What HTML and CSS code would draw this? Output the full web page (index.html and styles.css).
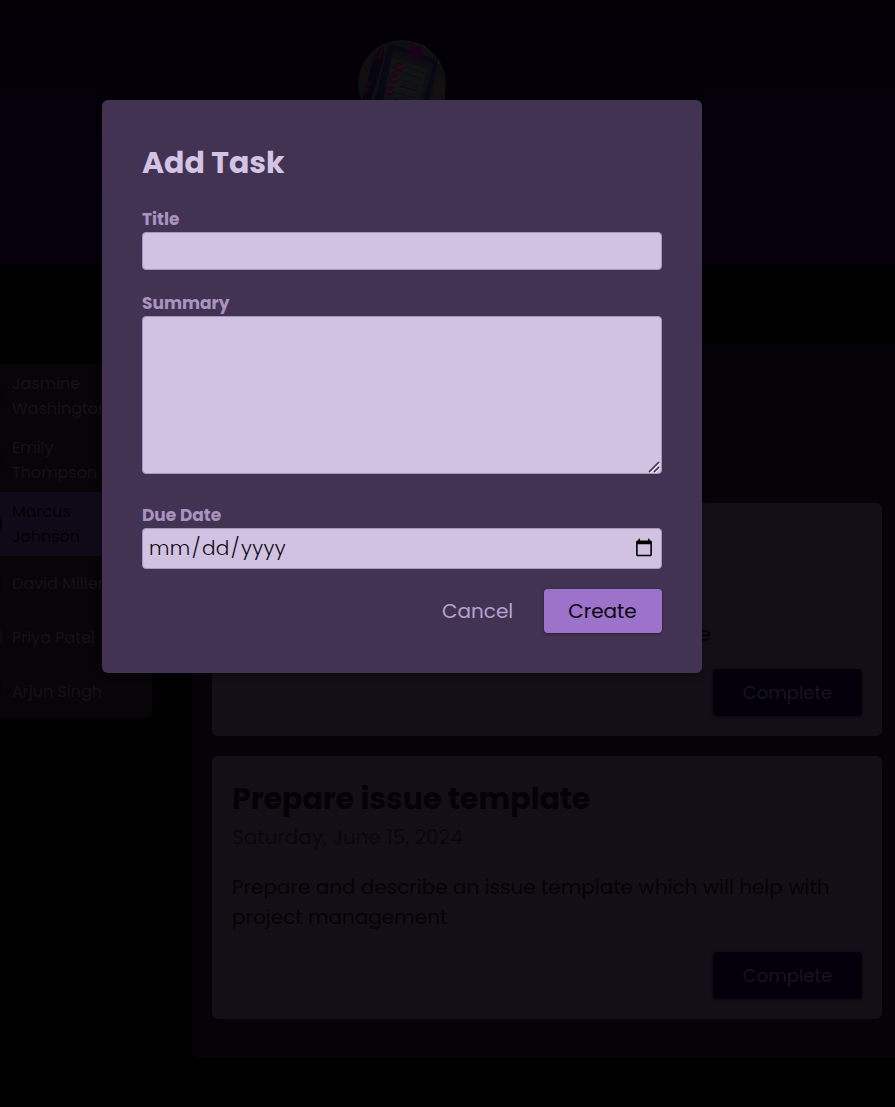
FILE: index.html
```html
<!DOCTYPE html>
<html lang="en">
<head>
<meta charset="utf-8">
<title>Add Task</title>
<link rel="stylesheet" href="styles.css">
</head>
<body>
<div class="page">
  <header class="header">
    <svg class="logo" viewBox="0 0 88 88" width="88" height="88" aria-hidden="true">
      <circle cx="44" cy="44" r="44" fill="#0f0f10"/>
      <path d="M66 88 Q72 52 82 34 Q90 52 86 66 L80 88Z" fill="#141011"/>
      <path d="M22 8 L26 6 L25 20 L13 60 L7 63 L5 58 L14 24Z" fill="#070512"/>
      <path d="M24 5 L26 9 L23 19 L18 18Z M18 14 L12 27 L14 15 L18 11Z" fill="#160512"/>
      <path d="M9 41 L14 42 L13 46 L8 45Z M7 47 L12 48 L11 52 L6 51Z" fill="#160512"/>
      <path d="M34 4 L79 20 Q81 21 80 24 L64 88 L10 88 L30 7 Q31 3 34 4Z" fill="#080814"/>
      <path d="M35 9 L75 24 L59 88 L19 88Z" fill="#0d0e12"/>
      <path d="M34 18 L69 29 L56 88 L20 88Z" fill="#121313"/>
      <path d="M44 13 L51 12 L54 5 Q60 2 64 8 L64 14 L66 22 L58 19Z" fill="#1a0319"/>
      <g fill="#1e0619"><circle cx="41" cy="27" r="5"/><circle cx="36" cy="39" r="5"/><circle cx="32" cy="51" r="5"/></g>
      <g fill="none" stroke="#190617"><path d="M47 27 L66 33 M43 40 L61 46 M39 53 L58 58"/></g>
      <g fill="none" stroke="#0b0b0e"><path d="M46 33 L64 39 M42 46 L59 51 M37 59 L55 65"/></g>
      <g fill="none" stroke="#211b20"><path d="M38 26 l3 2 l5 -3 M33 38 l3 2 l5 -3 M29 50 l3 2 l5 -3"/></g>
      <path d="M57 3 l3 2 M65 5 l2 3 M80 21 l1 3" stroke="#222124" fill="none"/>
    </svg>
  </header>
  <main class="main">
    <aside class="users">
      <div class="user"><i class="avatar"></i><span>Jasmine<br>Washington</span></div>
      <div class="user"><i class="avatar"></i><span>Emily<br>Thompson</span></div>
      <div class="user user-active"><i class="avatar avatar-black"></i><span>Marcus<br>Johnson</span></div>
      <div class="user"><i class="avatar"></i><span>David Miller</span></div>
      <div class="user"><i class="avatar avatar-light"></i><span>Priya Patel</span></div>
      <div class="user"><i class="avatar"></i><span>Arjun Singh</span></div>
    </aside>
    <section class="tasks">
      <article class="card card-first">
        <p class="summary summary-end">e</p>
        <div class="card-actions"><button class="complete">Complete</button></div>
      </article>
      <article class="card">
        <h2 class="card-title">Prepare issue template</h2>
        <time class="date">Saturday, June 15, 2024</time>
        <p class="summary">Prepare and describe an issue template which will help with<br>project management</p>
        <div class="card-actions"><button class="complete">Complete</button></div>
      </article>
    </section>
  </main>
</div>
<div class="modal">
  <h2 class="modal-title">Add Task</h2>
  <form class="form">
    <label class="label" for="title">Title</label>
    <input class="field field-title" id="title" type="text">
    <label class="label label-summary" for="summary">Summary</label>
    <div class="summary-wrap">
      <textarea class="field field-summary" id="summary"></textarea>
      <svg class="grip" viewBox="0 0 12 12" width="12" height="12" aria-hidden="true"><path d="M2.2 11.8L11.8 2.2M7.2 11.8L11.8 7.2" stroke="#f3edf8" stroke-width="1.2" fill="none"/><path d="M1 11L11 1M6 11L11 6" stroke="#3b3442" stroke-width="1.6" fill="none"/></svg>
    </div>
    <label class="label label-date" for="due">Due Date</label>
    <input class="field field-date" id="due" type="date">
    <div class="actions">
      <button class="cancel" type="button">Cancel</button>
      <button class="create" type="button">Create</button>
    </div>
  </form>
</div>
</body>
</html>
```
FILE: styles.css
```css
* { box-sizing: border-box; }
body {
  margin: 0;
  height: 1107px;
  overflow: hidden;
  background: #000001;
  font-family: Poppins, Inter, sans-serif;
}
button, input, textarea { font: inherit; }
h2, p { margin: 0; }
.page { width: 895px; height: 1107px; overflow: hidden; }
.header {
  height: 264px;
  padding-top: 40px;
  padding-left: 358px;
  background: linear-gradient(180deg, #030006, #07000d);
  box-shadow: 0 2px 8px #000;
}
.logo { display: block; }
.main { display: flex; align-items: flex-start; gap: 40px; margin-left: -48px; padding-top: 80px; }
.users {
  flex: none;
  width: 200px;
  margin-top: 20px;
  border-radius: 6px;
  overflow: hidden;
  background: #070508;
  color: #141216;
  font-size: 16px;
  line-height: 25px;
}
.user { display: flex; align-items: center; gap: 10px; padding: 7px 10px; white-space: nowrap; }
.user-active { background: #0f0a18; color: #030205; }
.avatar { flex: none; width: 40px; height: 40px; border-radius: 50%; background: #040306; }
.avatar-black { background: #000; }
.avatar-light { background: #0d0c0f; }
.tasks {
  flex: none;
  width: 710px;
  height: 714px;
  padding: 159px 20px 0;
  display: flex;
  flex-direction: column;
  gap: 20px;
  border-radius: 6px;
  background: #050308;
}
.card { height: 263px; padding: 20px; border-radius: 6px; background: #121016; display: flex; flex-direction: column; }
.card-first { height: 233px; }
.card-title { font-size: 30px; font-weight: 700; line-height: 45px; color: #040207; white-space: nowrap; }
.date { display: block; margin-top: 1px; font-size: 20px; line-height: 30px; color: #09070c; }
.summary { margin-top: 20px; font-size: 20px; line-height: 30px; color: #040306; white-space: nowrap; }
.summary-end { width: 479px; margin-top: 96px; text-align: right; }
.card-actions { display: flex; justify-content: flex-end; margin-top: auto; }
.complete {
  width: 149px;
  height: 47px;
  padding: 0;
  border: 0;
  border-radius: 4px;
  background: #04000b;
  color: #18151d;
  font-size: 18px;
  box-shadow: 0 1px 3px #0b090e;
}
.modal {
  position: absolute;
  left: 102px;
  top: 100px;
  width: 600px;
  height: 573px;
  padding: 40px;
  border-radius: 6px;
  background: #433352;
  box-shadow: 0 2px 8px rgba(0, 0, 0, .3);
}
.modal-title { height: 66px; font-size: 30px; font-weight: 700; line-height: 45px; color: #d3c4e5; }
.form { display: flex; flex-direction: column; }
.label { height: 26px; font-size: 17px; font-weight: 700; line-height: 26px; color: #a993c0; }
.label-summary { margin-top: 20px; }
.label-date { margin-top: 28px; }
.field { width: 520px; border: 1px solid #a993c0; border-radius: 4px; outline: 0; background: #d1c2e2; color: #100c14; }
.field-title { height: 38px; }
.summary-wrap { position: relative; height: 158px; }
.field-summary { display: block; height: 158px; resize: none; }
.grip { position: absolute; right: 2px; bottom: 1px; }
.field-date { height: 41px; padding: 3px 5px 5px; font-size: 20px; font-weight: 300; letter-spacing: .4px; }
.actions { display: flex; justify-content: flex-end; gap: 31px; margin-top: 20px; }
.cancel, .create { height: 44px; padding: 0; border: 0; font-size: 20px; }
.cancel { width: 71px; background: none; color: #b5a1cd; white-space: nowrap; }
.create { width: 118px; padding-right: 1px; border-radius: 4px; background: #9d72ca; color: #0c0711; box-shadow: 0 1px 3px rgba(0, 0, 0, .4); }
```
